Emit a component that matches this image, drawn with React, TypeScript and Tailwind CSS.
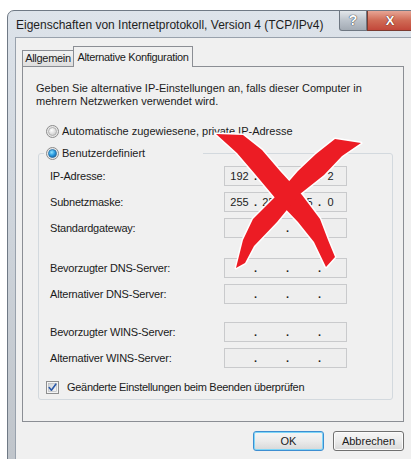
import { Fragment } from "react";

type Row = { label: string; parts: string[]; gap?: string };

const ROWS: Row[] = [
  { label: "IP-Adresse:", parts: ["192", "", "", "2"] },
  { label: "Subnetzmaske:", parts: ["255", "255", "255", "0"] },
  { label: "Standardgateway:", parts: ["", "", "", ""] },
  { label: "Bevorzugter DNS-Server:", parts: ["", "", "", ""], gap: "mt-[20px]" },
  { label: "Alternativer DNS-Server:", parts: ["", "", "", ""] },
  { label: "Bevorzugter WINS-Server:", parts: ["", "", "", ""], gap: "mt-[18px]" },
  { label: "Alternativer WINS-Server:", parts: ["", "", "", ""] },
];

function Radio({ checked }: { checked?: boolean }) {
  const id = checked ? "radio-on" : "radio-off";
  return (
    <svg width="13" height="13" viewBox="0 0 13 13" className="shrink-0">
      <defs>
        <radialGradient id={id} cx="40%" cy="35%" r="70%">
          {checked ? (
            <>
              <stop offset="0%" stopColor="#8fe3ff" />
              <stop offset="55%" stopColor="#2a9be0" />
              <stop offset="100%" stopColor="#14609f" />
            </>
          ) : (
            <>
              <stop offset="0%" stopColor="#ffffff" />
              <stop offset="100%" stopColor="#c9c9c9" />
            </>
          )}
        </radialGradient>
      </defs>
      <circle cx="6.5" cy="6.5" r="6" fill="#e9e9e9" stroke="#8b8b8b" />
      <circle cx="6.5" cy="6.5" r="4" fill={`url(#${id})`} stroke={checked ? "#2f6f9f" : "#a7a7a7"} strokeWidth="0.8" />
    </svg>
  );
}

function CheckBox() {
  return (
    <svg width="13" height="13" viewBox="0 0 13 13" className="shrink-0">
      <defs>
        <linearGradient id="cb-fill" x1="0" y1="0" x2="1" y2="1">
          <stop offset="0%" stopColor="#cfd3d8" />
          <stop offset="100%" stopColor="#f7f7f7" />
        </linearGradient>
      </defs>
      <rect x="0.5" y="0.5" width="12" height="12" fill="#f4f4f4" stroke="#8e8f8f" />
      <rect x="2.5" y="2.5" width="8" height="8" fill="url(#cb-fill)" stroke="#b3b6ba" strokeWidth="0.6" />
      <path d="M3.2 6.6 L5.4 9.2 L9.8 3.2" fill="none" stroke="#2a58a8" strokeWidth="1.6" strokeLinecap="round" strokeLinejoin="round" />
    </svg>
  );
}

function IpField({ parts }: { parts: string[] }) {
  return (
    <div className="flex h-[20px] w-[123px] items-center border border-[#c9cacc] bg-[#eeeeee] leading-none text-[#222]">
      {parts.map((p, i) => (
        <Fragment key={i}>
          {i > 0 && <span className="w-[3px] text-center font-bold">.</span>}
          <span className={i < 3 ? "w-[29px] text-center" : "flex-1 pr-[6px] text-center"}>{p}</span>
        </Fragment>
      ))}
    </div>
  );
}

function Button({ children, primary }: { children: string; primary?: boolean }) {
  return (
    <div
      className={
        "flex h-[20px] w-[71px] items-center justify-center rounded-[3px] border bg-gradient-to-b from-[#f6f6f6] via-[#ebebeb] to-[#d8d8d8] " +
        (primary
          ? "border-[#3d8ed1] shadow-[inset_0_0_0_1px_#7fd6f7]"
          : "border-[#707070] shadow-[inset_0_0_0_1px_#fbfbfb]")
      }
    >
      {children}
    </div>
  );
}

// red brush cross drawn over the form
function Cross() {
  const a = "216,134 237,153 255,174 276,199 298,222 314,242 326,267 335,257 328,240 320,219 302,195 280,171 262,150 243,135";
  const b = "335,139 316,154 298,171 278,194 253,219 243,240 236,268 245,263 254,246 277,222 300,194 324,175 342,156 361,143";
  return (
    <svg className="pointer-events-none absolute left-0 top-0" width="411" height="459" viewBox="0 0 411 459">
      <polygon points={a} fill="#fff" stroke="#fff" strokeWidth="3" strokeLinejoin="round" />
      <polygon points={b} fill="#fff" stroke="#fff" strokeWidth="3" strokeLinejoin="round" />
      <polygon points={a} fill="#ec1c24" />
      <polygon points={b} fill="#ec1c24" />
    </svg>
  );
}

export default function App() {
  return (
    <div className="relative h-[459px] w-[411px] overflow-hidden bg-white font-['Liberation_Sans',Arial,sans-serif] text-[11px] text-[#1b1b1b]">
      <div className="ml-[7px] mt-[10px] flex h-[460px] w-[407px] flex-col rounded-tl-[7px] border border-[#6f7985] bg-gradient-to-b from-[#dde3ea] via-[#cdd3da] to-[#bfc4ca]">
        {/* caption */}
        <div className="flex h-[26px] items-start">
          <span className="pl-[8px] pt-[6px] text-[12px] leading-[16px] text-[#1e1e1e]">
            Eigenschaften von Internetprotokoll, Version 4 (TCP/IPv4)
          </span>
          <div className="ml-auto flex">
            <div className="flex h-[20px] w-[28px] items-center justify-center rounded-bl-[3px] border border-t-0 border-[#6e7782] bg-gradient-to-b from-[#e3e7eb] via-[#bcc3cb] to-[#a3abb4] text-[14px] font-bold text-white [text-shadow:0_0_1px_#2b3440,0_0_1px_#2b3440]">
              ?
            </div>
            <div className="flex h-[20px] w-[46px] items-center justify-center border border-t-0 border-[#7a3a30] bg-gradient-to-b from-[#e7a595] via-[#cf6a55] to-[#c2473a] text-[13px] font-bold text-white [text-shadow:0_0_1px_#5a1a10,0_0_1px_#5a1a10]">
              X
            </div>
          </div>
        </div>

        {/* client area */}
        <div className="ml-[7px] flex-1 border-l border-t border-[#98a1ac] bg-[#f0f0f0] pl-[6px] pt-[8px]">
          <div className="flex items-end">
            <div className="flex h-[16px] w-[52px] items-center justify-center border border-b-0 border-[#8b8e94] bg-gradient-to-b from-[#f2f2f2] to-[#dedede] tracking-[-0.3px]">
              Allgemein
            </div>
            <div className="relative z-10 -mb-px -ml-px flex h-[21px] w-[120px] items-center justify-center border border-b-0 border-[#8b8e94] bg-[#f0f0f0] tracking-[-0.35px]">
              Alternative Konfiguration
            </div>
          </div>

          <div className="h-[356px] w-[382px] border border-[#8b8e94] bg-[#f0f0f0] pl-[13px] pt-[15px]">
            <p className="leading-[13px]">
              Geben Sie alternative IP-Einstellungen an, falls dieser Computer in
              <br />
              mehrern Netzwerken verwendet wird.
            </p>

            <div className="ml-[10px] mt-[15px] flex h-[16px] items-center gap-[3px]">
              <Radio />
              <span>Automatische zugewiesene, private IP-Adresse</span>
            </div>

            <fieldset className="ml-[2px] mt-[6px] w-[355px] rounded-[3px] border border-[#d3d9de] pb-[4px] pl-[5px]">
              <legend className="flex h-[16px] w-[159px] items-center gap-[3px] pl-[2px]">
                <Radio checked />
                <span>Benutzerdefiniert</span>
              </legend>

              <div className="mt-[5px] pl-[6px]">
                {ROWS.map((r, i) => (
                  <div key={r.label} className={"grid grid-cols-[174px_123px] items-center " + (r.gap ?? (i > 0 ? "mt-[6px]" : ""))}>
                    <span className="tracking-[-0.2px]">{r.label}</span>
                    <IpField parts={r.parts} />
                  </div>
                ))}

                <div className="mt-[11px] flex h-[16px] items-center gap-[6px]">
                  <div className="-ml-[4px]">
                    <CheckBox />
                  </div>
                  <span className="pl-[2px] tracking-[-0.3px]">Geänderte Einstellungen beim Beenden überprüfen</span>
                </div>
              </div>
            </fieldset>
          </div>

          <div className="mt-[9px] flex w-[382px] justify-end gap-[9px]">
            <Button primary>OK</Button>
            <Button>Abbrechen</Button>
          </div>
        </div>
      </div>
      <Cross />
    </div>
  );
}
